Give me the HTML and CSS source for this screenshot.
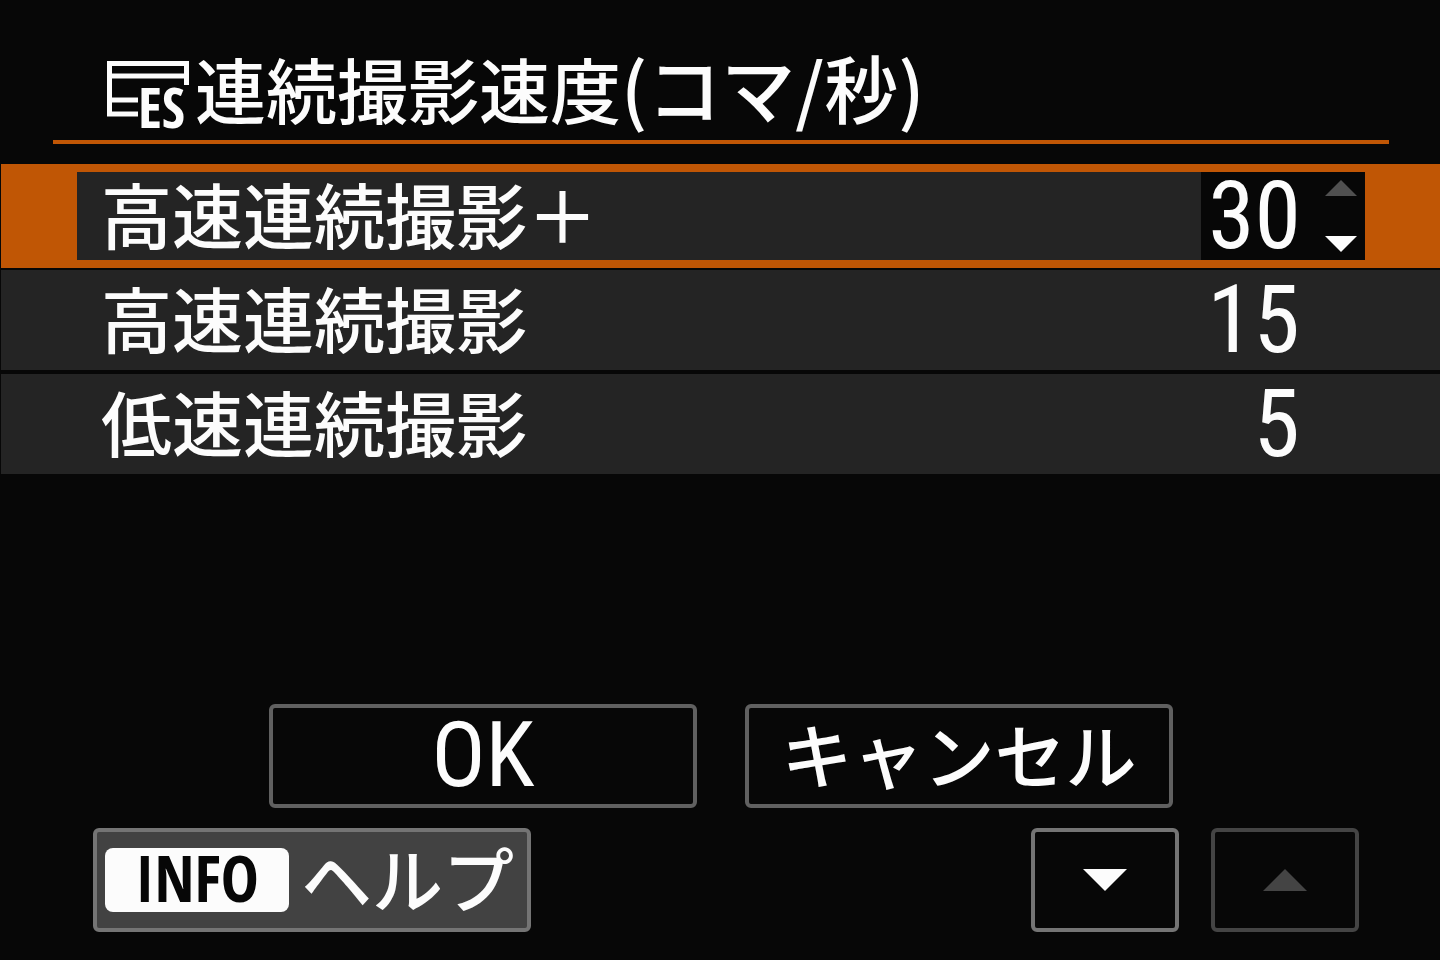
FILE: index.html
```html
<!DOCTYPE html>
<html lang="ja">
<head>
<meta charset="UTF-8">
<meta name="viewport" content="width=device-width, initial-scale=1.0">
<title>連続撮影速度</title>
<link rel="stylesheet" href="styles.css">
</head>
<body>
    <header class="header">
        <svg class="drive-icon" width="88" height="76" viewBox="0 0 88 76" aria-hidden="true">
            <path class="frame" d="M33 60H4.5V9.5H81.5V31M4.5 22H81.5M4.5 46H33"/>
            <text x="33" y="74">ES</text>
        </svg>
        <h1 class="title">連続撮影速度<span class="unit">(コマ/秒)</span></h1>
    </header>

    <main class="settings">
        <div class="row selected">
            <div class="row-inner">
                <label class="name" for="high-plus">高速連続撮影＋</label>
                <div class="stepper">
                    <input class="value" id="high-plus" type="text" value="30" readonly>
                    <div class="arrows">
                        <button class="arrow" type="button" aria-label="上げる" disabled>
                            <svg width="32" height="16" viewBox="0 0 32 16"><path d="M0 16L16 0L32 16Z"/></svg>
                        </button>
                        <button class="arrow" type="button" aria-label="下げる">
                            <svg width="32" height="16" viewBox="0 0 32 16"><path d="M0 0H32L16 16Z"/></svg>
                        </button>
                    </div>
                </div>
            </div>
        </div>
        <div class="row">
            <label class="name" for="high">高速連続撮影</label>
            <input class="value" id="high" type="text" value="15" readonly>
        </div>
        <div class="row">
            <label class="name" for="low">低速連続撮影</label>
            <input class="value" id="low" type="text" value="5" readonly>
        </div>
    </main>

    <footer class="footer">
        <div class="actions">
            <button class="btn latin" type="button">OK</button>
            <button class="btn" type="button"><span class="name">キャンセル</span></button>
        </div>
        <div class="tools">
            <button class="btn help" type="button"><span class="badge">INFO</span><span class="name">ヘルプ</span></button>
            <div class="pager">
                <button class="btn page" type="button" aria-label="下へ">
                    <svg width="44" height="22" viewBox="0 0 44 22"><path d="M0 0H44L22 22Z"/></svg>
                </button>
                <button class="btn page" type="button" aria-label="上へ" disabled>
                    <svg width="44" height="22" viewBox="0 0 44 22"><path d="M0 22L22 0L44 22Z"/></svg>
                </button>
            </div>
        </div>
    </footer>
</body>
</html>
```
FILE: styles.css
```css
* {
    box-sizing: border-box;
}

body {
    display: flex;
    flex-direction: column;
    min-height: 100vh;
    margin: 0;
    padding: 42px 0 28px;
    background-color: #070707;
    color: #fcfcfc;
    font-family: "Noto Sans CJK JP", sans-serif;
    font-size: 71px;
    font-weight: 500;
    line-height: 88px;
}

button,
input {
    margin: 0;
    padding: 0;
    border: none;
    background: none;
    color: inherit;
    font: inherit;
}

svg {
    display: block;
    fill: currentColor;
}

.header {
    display: flex;
    align-items: flex-start;
    height: 102px;
    margin: 0 51px 20px 53px;
    padding-left: 52px;
    border-bottom: 4px solid #c05605;
}

.drive-icon {
    margin-top: 12px;
    overflow: visible;
    font-family: "Open Sans Condensed", "Roboto Condensed", sans-serif;
    font-size: 56px;
    font-weight: bold;
}

.frame {
    fill: none;
    stroke: currentColor;
    stroke-width: 5;
}

.title {
    margin: 0 0 0 2px;
    font-size: inherit;
    font-weight: inherit;
    white-space: nowrap;
}

.unit {
    font-size: 74px;
}

/* Rows */
.settings {
    margin-left: 1px;
}

.row {
    display: flex;
    align-items: center;
    justify-content: space-between;
    height: 100px;
    margin-bottom: 4px;
    padding: 0 140px 0 100px;
    background-color: #242424;
}

.row.selected {
    height: 104px;
    margin-bottom: 2px;
    padding: 8px 75px 8px 76px;
    background-color: #c05605;
}

.row-inner {
    display: flex;
    flex: 1;
    justify-content: space-between;
    padding-left: 24px;
    background-color: #242424;
}

.name {
    height: 88px;
    line-height: 80px;
}

.value {
    width: 100px;
    height: 88px;
    text-align: right;
    font-family: "Roboto Condensed", "Liberation Sans Narrow", sans-serif;
    font-size: 94px;
    font-weight: 400;
}

.stepper {
    display: flex;
    justify-content: flex-end;
    width: 164px;
    height: 88px;
    padding-right: 8px;
    background-color: #070707;
}

.arrows {
    display: flex;
    flex-direction: column;
    justify-content: space-between;
    margin-left: 24px;
    padding: 8px 0;
}

.arrow:disabled {
    color: #505050;
}

/* Buttons */
.footer {
    margin-top: auto;
}

.actions {
    display: flex;
    justify-content: center;
    gap: 48px;
    margin-bottom: 20px;
    padding-left: 2px;
}

.btn {
    display: flex;
    align-items: center;
    justify-content: center;
    width: 428px;
    height: 104px;
    border: 4px solid #606060;
    border-radius: 6px;
    white-space: nowrap;
}

.latin {
    font-family: "Roboto Condensed", "Liberation Sans Narrow", sans-serif;
    font-size: 90px;
    font-weight: 400;
}

.tools {
    display: flex;
    justify-content: space-between;
    padding: 0 81px 0 93px;
}

.help {
    justify-content: flex-start;
    gap: 12px;
    width: 438px;
    padding-left: 8px;
    border-color: #747474;
    background-color: #424242;
}

.badge {
    width: 184px;
    height: 64px;
    border-radius: 8px;
    background-color: #fcfcfc;
    color: #070707;
    font-family: "Open Sans Condensed", "Roboto Condensed", sans-serif;
    font-size: 64px;
    font-weight: bold;
    line-height: 60px;
}

.pager {
    display: flex;
    gap: 32px;
}

.page {
    width: 148px;
    border-color: #747474;
}

.page:disabled {
    border-color: #444;
    color: #444;
}
```
